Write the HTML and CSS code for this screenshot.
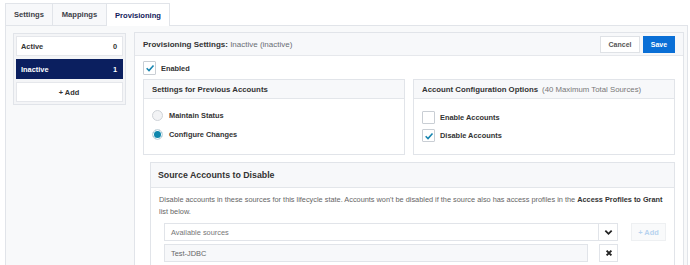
FILE: index.html
```html
<!DOCTYPE html>
<html>
<head>
<meta charset="utf-8">
<link rel="stylesheet" href="styles.css">
</head>
<body>
<div class="tabs">
  <div class="tab">Settings</div>
  <div class="tab">Mappings</div>
  <div class="tab active">Provisioning</div>
</div>
<div class="pane">
  <aside class="states">
    <div class="state"><span>Active</span><span>0</span></div>
    <div class="state selected"><span>Inactive</span><span>1</span></div>
    <div class="state add">+ Add</div>
  </aside>
  <section class="prov">
    <header class="prov-head">
      <div class="prov-title"><b>Provisioning Settings:</b> Inactive (inactive)</div>
      <div class="actions">
        <button class="btn cancel">Cancel</button>
        <button class="btn save">Save</button>
      </div>
    </header>
    <div class="prov-body">
      <label class="check-row enabled">
        <span class="checkbox checked"><svg viewBox="0 0 12 12" width="10" height="10"><path d="M2 6.3 L4.8 9 L10.2 3" fill="none" stroke="#1785b0" stroke-width="1.9"/></svg></span>
        <span class="lbl">Enabled</span>
      </label>
      <div class="two-col">
        <div class="box">
          <div class="box-head">Settings for Previous Accounts</div>
          <div class="box-body opts radios">
            <label class="check-row"><span class="radio"></span><span class="lbl">Maintain Status</span></label>
            <label class="check-row"><span class="radio on"></span><span class="lbl">Configure Changes</span></label>
          </div>
        </div>
        <div class="box">
          <div class="box-head">Account Configuration Options <span class="muted">(40 Maximum Total Sources)</span></div>
          <div class="box-body opts checks">
            <label class="check-row"><span class="checkbox"></span><span class="lbl">Enable Accounts</span></label>
            <label class="check-row"><span class="checkbox checked"><svg viewBox="0 0 12 12" width="10" height="10"><path d="M2 6.3 L4.8 9 L10.2 3" fill="none" stroke="#1785b0" stroke-width="1.9"/></svg></span><span class="lbl">Disable Accounts</span></label>
          </div>
        </div>
      </div>
      <div class="box source">
        <div class="box-head big">Source Accounts to Disable</div>
        <div class="box-body src-body">
          <p class="desc">Disable accounts in these sources for this lifecycle state. Accounts won't be disabled if the source also has access profiles in the <b>Access Profiles to Grant</b><br>list below.</p>
          <div class="src-row">
            <div class="select">
              <div class="field">Available sources</div>
              <div class="icon-btn"><svg viewBox="0 0 10 10" width="9" height="9"><path d="M1.5 3 L5 6.5 L8.5 3" fill="none" stroke="#222" stroke-width="2"/></svg></div>
            </div>
            <button class="add-src">+ Add</button>
          </div>
          <div class="src-row">
            <div class="field chosen">Test-JDBC</div>
            <div class="icon-btn del"><svg viewBox="0 0 10 10" width="8" height="8"><path d="M2 2 L8 8 M8 2 L2 8" fill="none" stroke="#222" stroke-width="2.4"/></svg></div>
          </div>
        </div>
      </div>
    </div>
  </section>
</div>
</body>
</html>
```
FILE: styles.css
```css
* { box-sizing: border-box; }
html, body { height: 265px; }
body {
  margin: 0;
  background: #fff;
  font-family: "Liberation Sans", Arial, sans-serif;
  font-size: 7.5px;
  color: #333;
  overflow: hidden;
}
.tabs {
  display: flex;
  margin: 3px 0 0 5px;
  height: 22px;
}
.tab {
  height: 22px;
  display: flex;
  align-items: center;
  justify-content: center;
  font-weight: bold;
  font-size: 7.6px;
  color: #3d4148;
  background: #f7f8fa;
  border: 1px solid #e1e4e9;
  border-bottom: none;
  border-right: none;
}
.tab:nth-child(1) { width: 47px; }
.tab:nth-child(2) { width: 54px; }
.tab.active {
  width: 64px;
  background: #fff;
  color: #13205a;
  border-right: 1px solid #e1e4e9;
  height: 23px;
  margin-bottom: -1px;
  position: relative;
  z-index: 1;
}
.pane {
  margin-left: 5px;
  margin-right: 2px;
  height: 240px;
  border: 1px solid #e1e4e9;
  border-bottom: none;
  background: #f8f9fa;
  display: flex;
  align-items: flex-start;
  padding: 6px 3px 0 7px;
  gap: 8px;
  overflow: hidden;
}
.states {
  width: 113px;
  flex: none;
  border: 1px solid #e1e4e9;
  background: #f4f5f7;
  padding: 2px;
  display: flex;
  flex-direction: column;
  gap: 3px;
  margin-top: 1px;
}
.state {
  height: 20px;
  border: 1px solid #e5e7eb;
  background: #fff;
  display: flex;
  align-items: center;
  justify-content: space-between;
  padding: 0 5px 0 4px;
  font-weight: bold;
  font-size: 7.4px;
  color: #333;
}
.state.selected {
  background: #0b1f5f;
  border-color: #0b1f5f;
  color: #fff;
}
.state.add { justify-content: center; }
.prov {
  flex: 1;
  min-width: 0;
  border: 1px solid #e1e4e9;
  border-bottom: none;
  background: #fff;
  height: 234px;
  overflow: hidden;
}
.prov-head {
  height: 23px;
  background: #f7f8fa;
  border-bottom: 1px solid #e6e8ec;
  display: flex;
  align-items: center;
  justify-content: space-between;
  padding: 0 8px 0 8px;
}
.prov-title { font-size: 8px; color: #6a6e74; }
.prov-title b { color: #333; }
.actions { display: flex; gap: 3px; }
.btn {
  height: 17px;
  font-family: inherit;
  font-size: 7px;
  font-weight: bold;
  border: 1px solid #dfe2e6;
  background: #fff;
  color: #555;
  padding: 0;
}
.btn.cancel { width: 40px; }
.btn.save { width: 32px; background: #0a6fd6; border-color: #0a6fd6; color: #fff; }
.prov-body { padding: 5px 8px 0 8px; }
.check-row { display: flex; align-items: center; gap: 5px; }
.lbl { font-weight: bold; font-size: 7.4px; color: #333; }
.checkbox {
  width: 13px;
  height: 13px;
  border: 1px solid #c9ced4;
  background: #fff;
  display: flex;
  align-items: center;
  justify-content: center;
  border-radius: 1px;
}
.enabled { height: 14px; margin-bottom: 4px; }
.enabled .checkbox { height: 14px; }
.radio {
  width: 11px;
  height: 11px;
  border-radius: 50%;
  border: 1px solid #cfd3d8;
  background: #f2f3f5;
}
.radio.on {
  background: #0f87ad;
  border: 1px solid #dce0e4;
  box-shadow: inset 0 0 0 1px #fff;
}
.two-col { display: flex; gap: 8px; }
.box { flex: 1 1 0; min-width: 0; border: 1px solid #e1e4e9; background: #fff; }
.box-head {
  height: 19px;
  background: #f7f8fa;
  border-bottom: 1px solid #e3e6ea;
  display: flex;
  align-items: center;
  padding: 0 8px;
  font-size: 7.8px;
  font-weight: bold;
  color: #333;
  white-space: nowrap;
}
.muted { font-weight: normal; color: #777; margin-left: 4px; }
.opts { padding: 10px 8px 0; height: 55px; display: flex; flex-direction: column; }
.radios { gap: 7px; }
.radios .check-row { gap: 6px; height: 12px; }
.checks { padding-top: 12px; gap: 5px; }
.source { margin: 7px 0 0 7px; }
.box-head.big { height: 25px; font-size: 8.8px; padding: 0 7px; }
.src-body { padding: 6px 6px 30px 8px; }
.desc { margin: 0 0 5px; line-height: 12px; font-size: 7.35px; color: #666; white-space: nowrap; }
.desc b { color: #333; }
.src-row { display: flex; gap: 13px; margin: 0 0 3px 5px; }
.select { display: flex; width: 454px; }
.field {
  flex: 1;
  height: 18px;
  border: 1px solid #e1e4e9;
  background: #fff;
  display: flex;
  align-items: center;
  padding: 0 6px;
  font-size: 7.4px;
  color: #777;
}
.field.chosen { flex: none; width: 424px; background: #f7f8fa; color: #666; }
.icon-btn {
  width: 19px;
  height: 18px;
  border: 1px solid #e1e4e9;
  border-left: none;
  background: #fff;
  display: flex;
  align-items: center;
  justify-content: center;
}
.icon-btn.del { border-left: 1px solid #e1e4e9; margin-left: -2px; }
.add-src {
  width: 35px;
  height: 18px;
  border: 1px solid #eef0f2;
  background: #f9fafb;
  color: #b7d3ef;
  font-family: inherit;
  font-size: 7.4px;
  font-weight: bold;
  padding: 0;
}
```
